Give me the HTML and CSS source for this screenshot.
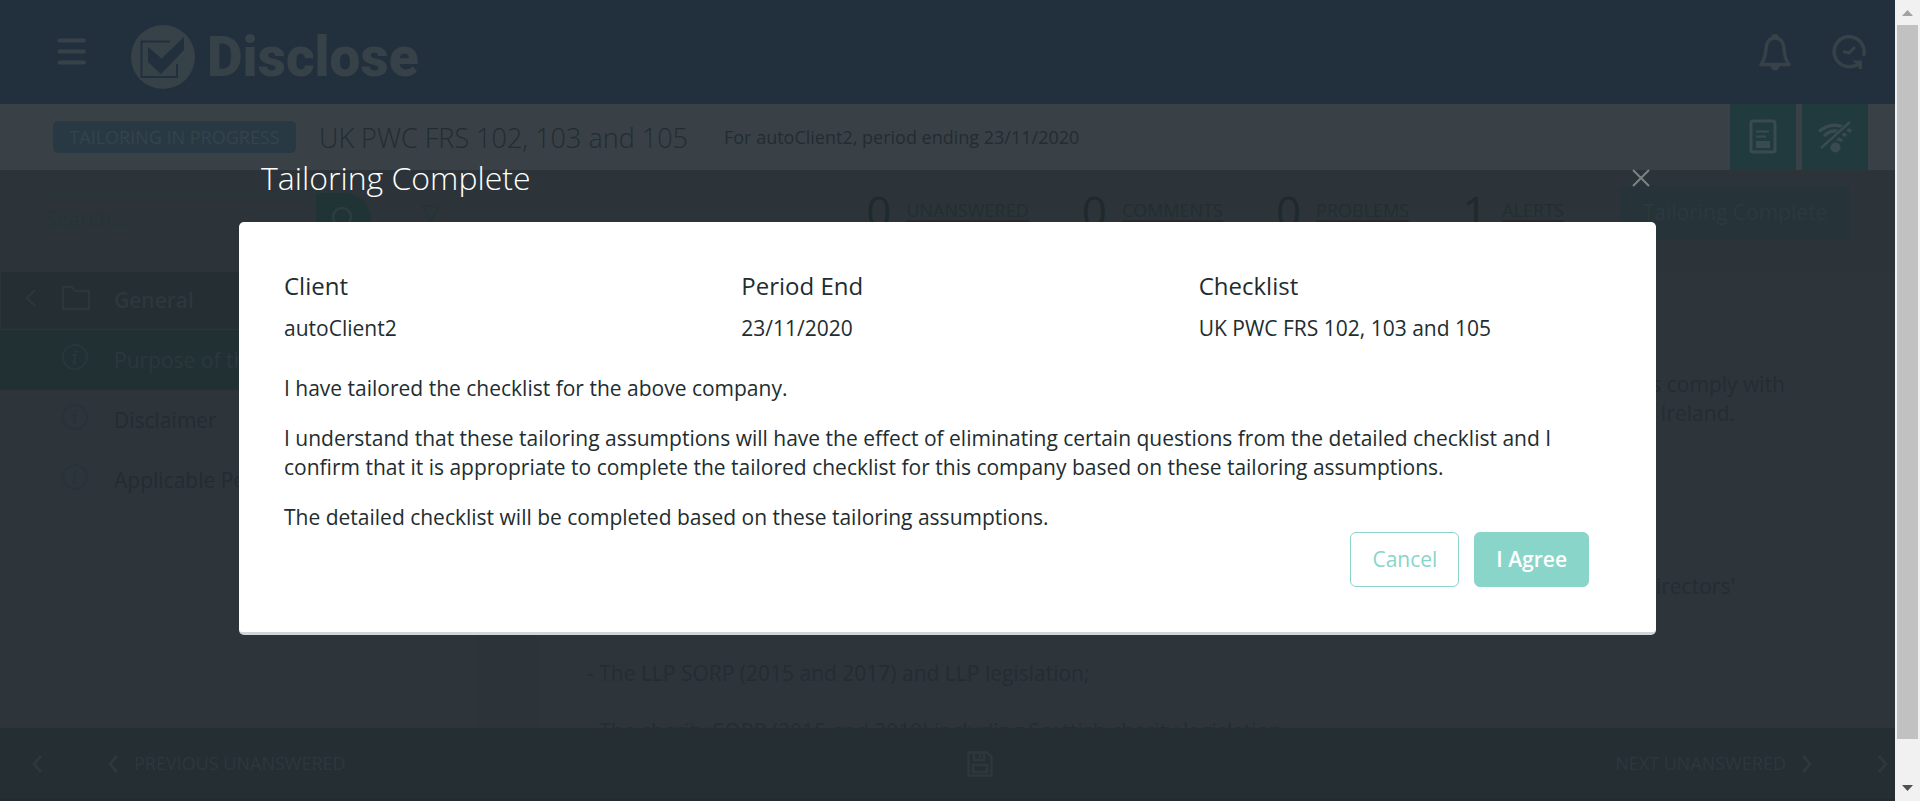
FILE: index.html
```html
<!DOCTYPE html>
<html lang="en">
<head>
<meta charset="utf-8">
<title>Disclose - Tailoring Complete</title>
<link rel="stylesheet" href="styles.css">
</head>
<body>
<div class="window">
  <div class="app">
    <header class="topbar">
      <button class="icon-button menu" aria-label="Menu">
        <svg width="30" height="28" viewBox="0 0 30 28"><path d="M3.500 2.500H28M3.500 13.500H28M3.500 24.500H28" stroke="currentColor" stroke-width="4" stroke-linecap="round"/></svg>
      </button>
      <a class="brand" href="#">
        <svg class="brand-mark" width="66" height="66" viewBox="0 0 66 66"><circle cx="33" cy="33" r="32" fill="#364148"/><path d="M40 17.500H11.500V53H47V40" fill="none" stroke="#22303e" stroke-width="2"/><path d="M18 23L31.500 34.500L54 13V26L31 50L18 38Z" fill="#22303e"/></svg>
        <span class="brand-name">Disclose</span>
      </a>
      <div class="topbar-actions">
        <button class="icon-button" aria-label="Notifications">
          <svg width="34" height="38" viewBox="0 0 34 38"><path d="M3 31.500H31C27.500 27 26.500 23 26 16C25.500 8.500 22 5 17 5S8.500 8.500 8 16C7.500 23 6.500 27 3 31.500Z" fill="none" stroke="currentColor" stroke-width="3.500" stroke-linejoin="round"/><path d="M13 5a4 4 0 0 1 8 0ZM12.500 33a4.500 4.500 0 0 0 9 0Z" fill="currentColor"/></svg>
        </button>
        <button class="icon-button" aria-label="Recent activity">
          <svg width="34" height="34" viewBox="0 0 34 34"><path d="M31.500 21A15 15 0 1 0 24 30" fill="none" stroke="currentColor" stroke-width="3.500"/><path d="M20 25.500H30V34H26.500V31L23 33L22 29.500L24 28.500Z" fill="currentColor"/><path d="M11 16.500L17 18L23 12" fill="none" stroke="currentColor" stroke-width="3"/></svg>
        </button>
      </div>
    </header>

    <div class="subbar">
      <span class="badge">TAILORING IN PROGRESS</span>
      <h1 class="checklist-name">UK PWC FRS 102, 103 and 105</h1>
      <p class="period">For autoClient2, period ending 23/11/2020</p>
      <div class="tiles">
        <button class="tile" aria-label="Report">
          <svg width="28" height="36" viewBox="0 0 28 36"><rect x="2" y="2" width="24" height="31" rx="2" fill="none" stroke="currentColor" stroke-width="3"/><path d="M7 12.500H20M7 17.500H17" stroke="currentColor" stroke-width="2"/><path d="M7 22H21V29H7Z" fill="currentColor"/></svg>
        </button>
        <button class="tile" aria-label="Work offline">
          <svg width="36" height="34" viewBox="0 0 36 34"><g fill="none" stroke="currentColor"><path d="M2 11.500Q17 -1 34 11.500M7 16Q17 6 29 16M19 18.500Q22 18.500 25 21" stroke-width="3.500"/><path d="M5 29L34 2" stroke="#213a3d" stroke-width="6"/><path d="M4 28L33 2" stroke-width="2.500"/></g><circle cx="18.500" cy="27.500" r="5" fill="currentColor"/></svg>
        </button>
      </div>
    </div>

    <div class="toolbar">
      <form class="search">
        <input class="search-input" type="text" placeholder="Search..." aria-label="Search">
        <button class="search-button" type="button" aria-label="Search">
          <svg width="28" height="28" viewBox="0 0 28 28"><circle cx="12" cy="11" r="9" fill="none" stroke="currentColor" stroke-width="2.500"/><path d="M18 17L26 25" stroke="currentColor" stroke-width="3"/></svg>
        </button>
      </form>
      <button class="icon-button filter" aria-label="Filter">
        <svg width="20" height="26" viewBox="0 0 20 26"><path d="M2 2H18L11 15V23L9 21V15Z" fill="none" stroke="currentColor" stroke-width="2"/></svg>
      </button>
      <div class="stats">
        <div class="stat"><span class="count">0</span><a class="stat-link" href="#">UNANSWERED</a></div>
        <div class="stat"><span class="count">0</span><a class="stat-link" href="#">COMMENTS</a></div>
        <div class="stat"><span class="count">0</span><a class="stat-link" href="#">PROBLEMS</a></div>
        <div class="stat"><span class="count">1</span><a class="stat-link" href="#">ALERTS</a></div>
      </div>
      <button class="complete">Tailoring Complete</button>
    </div>

    <div class="workspace">
      <nav class="sidebar">
        <a class="nav-item nav-section" href="#">
          <svg class="nav-back" width="10" height="18" viewBox="0 0 10 18"><path d="M9 1L1 9L9 17" fill="none" stroke="currentColor" stroke-width="2"/></svg>
          <svg class="nav-icon" width="30" height="26" viewBox="0 0 30 26"><path d="M2 2H11L14 6H28V24H2Z" fill="none" stroke="currentColor" stroke-width="2" stroke-linejoin="round"/></svg>
          <span>General</span>
        </a>
        <a class="nav-item nav-active" href="#">
          <svg class="nav-icon" width="28" height="28" viewBox="0 0 28 28"><circle cx="14" cy="14" r="12" fill="none" stroke="currentColor" stroke-width="2"/><path d="M11.500 12H14.500L12.500 20H15.500" fill="none" stroke="currentColor" stroke-width="2"/><circle cx="15" cy="8.500" r="1.500" fill="currentColor"/></svg>
          <span>Purpose of the</span>
        </a>
        <a class="nav-item" href="#">
          <svg class="nav-icon" width="28" height="28" viewBox="0 0 28 28"><circle cx="14" cy="14" r="12" fill="none" stroke="currentColor" stroke-width="2"/><path d="M11.500 12H14.500L12.500 20H15.500" fill="none" stroke="currentColor" stroke-width="2"/><circle cx="15" cy="8.500" r="1.500" fill="currentColor"/></svg>
          <span>Disclaimer</span>
        </a>
        <a class="nav-item" href="#">
          <svg class="nav-icon" width="28" height="28" viewBox="0 0 28 28"><circle cx="14" cy="14" r="12" fill="none" stroke="currentColor" stroke-width="2"/><path d="M11.500 12H14.500L12.500 20H15.500" fill="none" stroke="currentColor" stroke-width="2"/><circle cx="15" cy="8.500" r="1.500" fill="currentColor"/></svg>
          <span>Applicable Per</span>
        </a>
      </nav>
      <main class="document">
        <div class="excerpt">
          <p class="line-end">accounts comply with</p>
          <p class="line-end indent">of Ireland.</p>
        </div>
        <p class="line-end indent">directors'</p>
        <p class="doc-line">- The LLP SORP (2015 and 2017) and LLP legislation;</p>
        <p class="doc-line">- The charity SORP (2015 and 2019) including Scottish charity legislation</p>
      </main>
    </div>

    <footer class="footer">
      <button class="icon-button step" aria-label="Previous"><svg width="12" height="20" viewBox="0 0 12 20"><path d="M10 2L3 10L10 18" fill="none" stroke="currentColor" stroke-width="3"/></svg></button>
      <button class="icon-button step"><svg width="12" height="20" viewBox="0 0 12 20"><path d="M10 2L3 10L10 18" fill="none" stroke="currentColor" stroke-width="3"/></svg>PREVIOUS UNANSWERED</button>
      <button class="icon-button save" aria-label="Save"><svg width="26" height="26" viewBox="0 0 26 26"><path d="M1.500 1.500H20L24.500 6V24.500H1.500ZM7 2V9H17V2M13 3V7M6 14H20V21H6Z" fill="none" stroke="currentColor" stroke-width="2.500"/></svg></button>
      <button class="icon-button step">NEXT UNANSWERED<svg width="12" height="20" viewBox="0 0 12 20"><path d="M2 2L9 10L2 18" fill="none" stroke="currentColor" stroke-width="3"/></svg></button>
      <button class="icon-button step" aria-label="Next"><svg width="12" height="20" viewBox="0 0 12 20"><path d="M2 2L9 10L2 18" fill="none" stroke="currentColor" stroke-width="3"/></svg></button>
    </footer>

    <div class="overlay">
      <section class="modal" role="dialog" aria-labelledby="modal-title">
        <div class="modal-head">
          <h2 class="modal-title" id="modal-title">Tailoring Complete</h2>
          <button class="icon-button close" aria-label="Close"><svg width="18" height="18" viewBox="0 0 18 18"><path d="M1 1L17 17M17 1L1 17" stroke="currentColor" stroke-width="2"/></svg></button>
        </div>
        <div class="modal-card">
          <dl class="facts">
            <div><dt>Client</dt><dd>autoClient2</dd></div>
            <div><dt>Period End</dt><dd>23/11/2020</dd></div>
            <div><dt>Checklist</dt><dd>UK PWC FRS 102, 103 and 105</dd></div>
          </dl>
          <div class="statement">
            <p>I have tailored the checklist for the above company.</p>
            <p>I understand that these tailoring assumptions will have the effect of eliminating certain questions from the detailed checklist and I confirm that it is appropriate to complete the tailored checklist for this company based on these tailoring assumptions.</p>
            <p>The detailed checklist will be completed based on these tailoring assumptions.</p>
          </div>
          <div class="modal-actions">
            <button class="button cancel">Cancel</button>
            <button class="button agree">I Agree</button>
          </div>
        </div>
      </section>
    </div>
  </div>
  <div class="scrollbar" aria-hidden="true">
    <svg width="11" height="6" viewBox="0 0 11 6"><path d="M0 6L5.500 0L11 6Z" fill="#a3a3a3"/></svg>
    <div class="thumb"></div>
    <svg class="down" width="11" height="6" viewBox="0 0 11 6"><path d="M0 0L5.500 6L11 0Z" fill="#505050"/></svg>
  </div>
</div>
</body>
</html>
```
FILE: styles.css
```css
* { box-sizing: border-box; }
body, h1, h2, p, dl, dd { margin: 0; }
body {
  background: #2c343a;
  color: #222d30;
  font: 21px/29px "Open Sans", sans-serif;
  overflow: hidden;
}
button, input { font: inherit; color: inherit; }
a { color: inherit; text-decoration: none; }
svg { display: block; flex: none; }

.window { display: flex; height: 100vh; }
.app { position: relative; flex: 1; min-width: 0; display: flex; flex-direction: column; }
.icon-button { display: flex; align-items: center; padding: 0; border: 0; background: none; }

.topbar { flex: none; display: flex; align-items: center; height: 104px; padding: 0 29px 0 56px; background: #22303e; color: #364148; }
.brand { display: flex; align-items: center; gap: 11px; margin: 10px 0 0 44px; }
.brand-name { font: 900 55px/66px Roboto, sans-serif; }
.topbar-actions { display: flex; align-items: center; gap: 40px; margin-left: auto; }

.subbar { flex: none; display: flex; align-items: center; height: 66px; padding-left: 53px; background: #394147; }
.badge { width: 243px; height: 32px; border-radius: 5px; background: #293944; color: #35434a; font-size: 18px; line-height: 33px; text-align: center; }
.checklist-name { margin-left: 23px; font-size: 27px; font-weight: 300; }
.period { margin-left: 36px; font-size: 18px; }
.tiles { display: flex; gap: 6px; height: 100%; margin: 0 27px 0 auto; }
.tile { display: grid; place-items: center; width: 66px; padding: 0; border: 0; background: #213a3d; color: #394b50; }

.toolbar { flex: none; display: flex; align-items: flex-start; height: 101px; padding: 15px 45px 0 23px; }
.search { display: flex; width: 349px; height: 55px; margin-top: 7px; border: 1px solid #283638; border-radius: 28px; overflow: hidden; }
.search-input { flex: 1; min-width: 0; padding: 0 21px; border: 0; background: none; }
.search-input::placeholder { color: #253434; opacity: 1; }
.search-button { display: grid; place-items: center; width: 55px; padding: 0; border: 0; background: #203436; color: #2c3d40; }
.filter { margin: 19px 0 0 49px; color: #253434; }
.stats { display: flex; gap: 53px; margin-left: auto; }
.stat { display: flex; gap: 15px; align-items: center; }
.count { color: #1f2a2d; font-size: 44px; line-height: 52px; }
.stat-link { color: #232e31; font-size: 18px; line-height: 20px; border-bottom: 2px solid #28282f; }
.complete { width: 230px; height: 55px; padding: 0; margin-left: 56px; border: 0; border-radius: 6px; background: #263338; color: #2c393e; }

.workspace { flex: 1; min-height: 0; display: flex; overflow: hidden; }
.sidebar { width: 476px; background: #2d353b; }
.nav-item { display: grid; grid-template-columns: 35px 53px 1fr; align-items: center; height: 60px; padding-left: 26px; color: #222d31; }
.nav-icon { grid-column: 2; margin-bottom: 6px; color: #26333a; }
.nav-section { height: 59px; padding-left: 25px; border: 1px solid #2b363b; background: #242e33; color: #2d383d; font-weight: 600; }
.nav-back { margin-bottom: 6px; }
.nav-section .nav-icon { color: #2c373c; }
.nav-active { background: #203033; color: #2b383c; }
.nav-active .nav-icon { color: #28373b; }
.document { flex: 1; margin-left: 62px; padding: 99px 110px 0 49px; background: #2d353b; color: #232d32; }
.excerpt { margin-bottom: 144px; }
.line-end { text-align: right; }
.line-end.indent { padding-right: 50px; }
.doc-line { margin-top: 58px; }
.doc-line + .doc-line { margin-top: 29px; }

.footer { flex: none; display: flex; align-items: center; height: 73px; padding: 0 6px 0 31px; border-bottom: 2px solid #222b30; background: #242e33; color: #2d383d; font-size: 18px; }
.step { gap: 15px; }
.step + .step { margin-left: 64px; }
.save { margin: 0 auto; }

.overlay { position: absolute; inset: 0; padding: 156px 239px 0; }
.modal-head { display: flex; align-items: center; justify-content: space-between; height: 66px; padding: 0 6px 22px 22px; color: #fff; }
.modal-title { font-size: 32px; font-weight: 300; line-height: 44px; }
.close { color: #7b8387; }
.modal-card { padding: 48px 0 45px 45px; border-bottom: 3px solid #d0d6d9; border-radius: 5px; background: #fff; }
.facts { display: grid; grid-template-columns: repeat(3, 1fr); }
.facts dt { font-size: 24px; line-height: 32px; }
.facts dd { margin-top: 12px; }
.statement { display: grid; gap: 21px; margin-top: 31px; padding-right: 90px; }
.modal-actions { display: flex; justify-content: flex-end; gap: 15px; padding-right: 67px; }
.button { height: 55px; padding: 0 21px; border: 1px solid #8ad5c9; border-radius: 6px; background: #fff; color: #8ad5c9; }
.agree { background: #8ad5c9; color: #fff; font-weight: 600; }

.scrollbar { display: flex; flex-direction: column; align-items: center; width: 25px; padding: 10px 0; background: #f1f1f1; }
.thumb { width: 21px; height: 714px; margin-top: 9px; background: #c1c1c1; }
.down { margin-top: auto; }
```
